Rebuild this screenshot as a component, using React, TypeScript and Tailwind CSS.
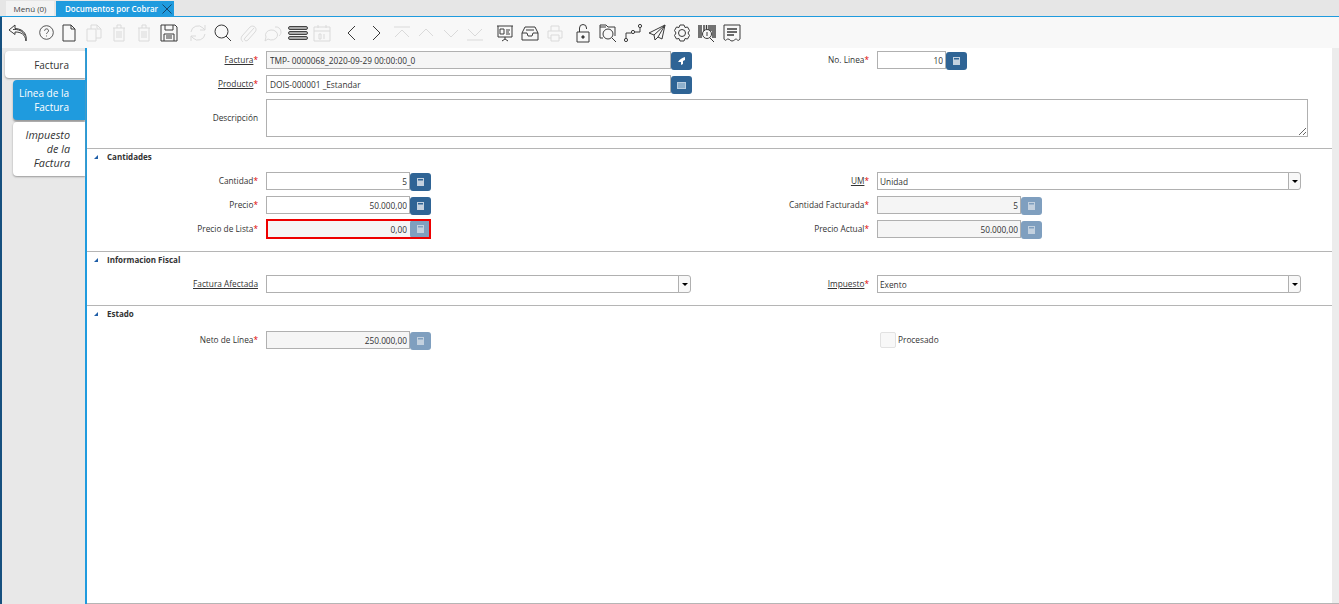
import type { ReactNode } from "react";

// toolbar icons, drawn on a 20x20 box
const icons: Record<string, ReactNode> = {
  back: <path d="M7 2 1 7l6 4.500V9c6 0 10 2 11 9 1-5-1-12-11-12.500zM5 6.500C10 6 15 8 16.500 12" />,
  help: (
    <>
      <circle cx="10" cy="10" r="8" />
      <path d="M7.800 8c0-3 4.600-3 4.600 0 0 1.800-2.300 1.800-2.300 3.600M10 13.600v1" />
    </>
  ),
  doc: <path d="M4 2h8l4 4v12H4zM12 2v4h4" />,
  copy: <path d="M3 6h9v12H3zM7 6V2h6l4 4v9h-5M13 2v4h4" />,
  trash: <path d="M4 5h12M8 5V2h4v3M5 5v13h10V5M8 8v7M10 8v7M12 8v7" />,
  save: (
    <>
      <path d="M2 2h14l2 2v14H2zM6 2v5h8V2M5 18v-7h10v7" />
      <path d="M7 13h6M7 15h6" />
    </>
  ),
  refresh: <path d="M3 9a7 7 0 0 1 12-4l2 2M17 11a7 7 0 0 1-12 4l-2-2M17 2v5h-5M3 18v-5h5" />,
  search: <path d="M8.500 2a6.500 6.500 0 1 0 0 13 6.500 6.500 0 0 0 0-13zM13 13l5 5" />,
  clip: <path d="M16 5 7 15c-2 2 1 4 3 2l7-8c3-3-1-8-5-5l-8 9c-2 3 0 5 1 6" />,
  chat: <path d="M12 4a5 5 0 0 1 6 5c0 2-1 3-2 4M8 7a6 5 0 1 1-3 9l-3 2 1-4a6 5 0 0 1 5-7z" />,
  calendar: (
    <>
      <path d="M2 4h16v14H2zM2 8h16M6 2v3M14 2v3" />
      <path d="M7 11h2v5H7zM12 11v5" />
    </>
  ),
  prev: <path d="m13 3-7 7 7 7" />,
  next: <path d="m7 3 7 7-7 7" />,
  first: <path d="M2 4h16M3 14l7-7 7 7" />,
  up: <path d="m3 13 7-7 7 7" />,
  down: <path d="m3 7 7 7 7-7" />,
  last: <path d="M2 17h16M3 6l7 7 7-7" />,
  report: (
    <>
      <path d="M2 3h16M3 3v11h14V3M10 14v2M7 18l3-2 3 2" />
      <path d="M5 6h4v5H5zM11 7h4M11 9h3M11 11h4" />
    </>
  ),
  archive: <path d="M5 4h10l3 6v7H2v-7zM2 10h5l1 3h4l1-3h5M6 7h8" />,
  print: <path d="M6 8V3h8v5M3 8h14v7h-3M6 15H3V8M6 12h8v6H6z" />,
  lock: (
    <>
      <path d="M4 9h12v10H4zM6.500 9V5a3.500 3.500 0 0 1 7 0v1" />
      <circle cx="10" cy="14" r="1.200" fill="currentColor" />
    </>
  ),
  zoom: (
    <>
      <path d="M2 15V2h6l2 2h7v9M2 4h6" />
      <circle cx="10" cy="11" r="5" />
      <path d="m14 15 4 4M2 15h3" />
    </>
  ),
  flow: (
    <>
      <circle cx="3" cy="17" r="1.600" />
      <circle cx="10" cy="9" r="1.600" />
      <circle cx="17" cy="3" r="1.600" />
      <path d="M3 15v-5h5.500M11.500 9H17V5" />
    </>
  ),
  send: <path d="M18 2 2 10l5 2 1 5 3-3 4 2zM18 2 7 12M18 2l-7 12" />,
  gear: (
    <>
      <path d="m8 2 4 0 1 2.500 2.500-.5 2 3.500L16 10l1.500 2.500-2 3.500-2.500-.5L12 18H8l-1-2.500-2.500.5-2-3.500L4 10 2.500 7.500l2-3.500 2.500.5z" />
      <circle cx="10" cy="10" r="3.500" />
    </>
  ),
  barcode: (
    <>
      <path d="M2 2v13M4 2v13M7 2v6M9.500 2v4M12 2v5M14 2v6M16 2v13M18 2v13" strokeWidth="1.400" />
      <circle cx="10" cy="11" r="4.500" />
      <path d="m13 15 4 4M10 9v4" />
    </>
  ),
  receipt: (
    <>
      <path d="M2 2h16v14c-2 3-3 0-4 0s-2 2-4 2-2-2-4-2-2 3-4 0z" />
      <path d="M5 6h10M5 9h10M5 12h7" strokeWidth="1.500" />
    </>
  ),
};

// spacing is taken from the gaps between the groups in the toolbar
const tools = [
  { name: "back", cls: "ml-[6px]" },
  { name: "help", cls: "ml-[10px]", size: "h-[17px] w-[17px]" },
  { name: "doc", cls: "ml-[4px]" },
  { name: "copy", cls: "ml-[5px]", off: true },
  { name: "trash", cls: "ml-[5px]", off: true },
  { name: "trash", cls: "ml-[5px]", off: true },
  { name: "save", cls: "ml-[5px]" },
  { name: "refresh", cls: "ml-[9px]", off: true },
  { name: "search", cls: "ml-[5px]" },
  { name: "clip", cls: "ml-[5px]", off: true },
  { name: "chat", cls: "ml-[5px]", off: true },
  { name: "list", cls: "ml-[5px]" },
  { name: "calendar", cls: "ml-[4px]", off: true },
  { name: "prev", cls: "ml-[10px]" },
  { name: "next", cls: "ml-[4px]" },
  { name: "first", cls: "ml-[6px]", off: true },
  { name: "up", cls: "ml-[4px]", off: true },
  { name: "down", cls: "ml-[5px]", off: true },
  { name: "last", cls: "ml-[4px]", off: true },
  { name: "report", cls: "ml-[10px]" },
  { name: "archive", cls: "ml-[5px]" },
  { name: "print", cls: "ml-[5px]", off: true },
  { name: "lock", cls: "ml-[8px]" },
  { name: "zoom", cls: "ml-[5px]" },
  { name: "flow", cls: "ml-[5px]" },
  { name: "send", cls: "ml-[4px]" },
  { name: "gear", cls: "ml-[5px]" },
  { name: "barcode", cls: "ml-[5px]" },
  { name: "receipt", cls: "ml-[5px]" },
];

function ToolIcon({ name, off, size }: { name: string; off?: boolean; size?: string }) {
  if (name === "list") {
    return (
      <div className="flex h-[20px] w-[20px] flex-col justify-center gap-[1px]">
        <div className="h-[4px] rounded-[2px] border border-[#444] bg-[#aaa]" />
        <div className="h-[4px] rounded-[2px] border border-[#444] bg-[#aaa]" />
        <div className="h-[4px] rounded-[2px] border border-[#444] bg-[#aaa]" />
      </div>
    );
  }
  return (
    <svg
      viewBox="0 0 20 20"
      fill="none"
      stroke="currentColor"
      strokeWidth="1"
      className={`${size ?? "h-[20px] w-[20px]"} ${off ? "text-[#dadada]" : "text-[#3a3a3a]"}`}
    >
      {icons[name]}
    </svg>
  );
}

function CalcButton({ off }: { off?: boolean }) {
  return (
    <div
      className={`flex h-[18px] w-[21px] shrink-0 items-center justify-center rounded-[3px] ${off ? "bg-[#7f9fbf]" : "bg-[#2f6495]"}`}
    >
      <svg viewBox="0 0 7 8" className="h-[8px] w-[7px]">
        <path fill="#c3d1df" d="M0 0h7v8H0z" />
        <path fill={off ? "#7f9fbf" : "#2f6495"} d="M1 1h5v1.500H1z" />
      </svg>
    </div>
  );
}

function Label({ text, link, req = true }: { text: string; link?: boolean; req?: boolean }) {
  return (
    <div className="pr-[8px] text-right text-[8.300px] text-[#333]">
      <span className={link ? "underline" : ""}>{text}</span>
      {req && <span className="text-[#e00000]">*</span>}
    </div>
  );
}

function TextField({
  value,
  right,
  off,
  boxed,
  button,
  width = "w-[144px]",
}: {
  value: string;
  right?: boolean;
  off?: boolean;
  boxed?: boolean;
  button?: ReactNode;
  width?: string;
}) {
  return (
    <div
      className={`flex items-center ${boxed ? "h-[20px] w-fit outline-2 -outline-offset-2 outline-[#ee0000]" : "[&>div]:mt-px [&>div]:-mb-px"}`}
    >
      <input
        readOnly
        value={value}
        className={`h-[18px] ${width} border ${boxed ? "border-transparent" : "border-[#b0b0b0]"} text-[8.300px] text-[#333] outline-none ${right ? "px-[2px] text-right" : "pl-[3px]"} ${off ? "bg-[#f5f5f5]" : "bg-white"}`}
      />
      {button}
    </div>
  );
}

function SelectField({ value, width }: { value: string; width: string }) {
  return (
    <div className="flex items-center">
      <input
        readOnly
        value={value}
        className={`h-[18px] ${width} border border-[#b0b0b0] bg-white px-[2px] text-[8.300px] text-[#333] outline-none`}
      />
      <div className="-ml-px flex h-[18px] w-[13px] items-center justify-center rounded-r-[3px] border border-[#b0b0b0] bg-[#f8f8f8]">
        <div className="h-0 w-0 border-x-[3px] border-t-[3px] border-x-transparent border-t-black" />
      </div>
    </div>
  );
}

function Section({ title, cls, children }: { title: string; cls: string; children: ReactNode }) {
  return (
    <section className={`border-t border-[#b5b5b5] ${cls}`}>
      <div className="flex h-[15px] items-center pl-[7px] text-[8px] font-bold text-[#333]">
        <div className="mr-[9px] h-0 w-0 border-b-[4px] border-l-[4px] border-b-[#1f5fa8] border-l-transparent" />
        {title}
      </div>
      {children}
    </section>
  );
}

const row = "grid grid-cols-[179px_426px_185px_431px] items-center";

export default function App() {
  return (
    <div className="flex h-[604px] w-[1339px] flex-col overflow-hidden bg-white font-['Open_Sans',sans-serif]">
      {/* tabs */}
      <div className="flex h-[17px] shrink-0 items-end border-b border-[#1f9bde] bg-[#e6e6e6] pl-[6px]">
        <div className="flex h-[15px] w-[48px] items-center justify-center bg-[#f3f3f3] text-[8px] text-[#444]">
          Menú (0)
        </div>
        <div className="ml-[2px] flex h-[15px] w-[118px] items-center whitespace-nowrap bg-[#1f9bde] pl-[9px] text-[8px] font-semibold text-white">
          Documentos por Cobrar
          <svg viewBox="0 0 10 10" className="ml-[4px] h-[10px] w-[10px]" stroke="#16456b" strokeWidth="1">
            <path d="m0.500 0.500 9 9M9.500 0.500l-9 9" />
          </svg>
        </div>
      </div>

      {/* toolbar */}
      <div className="flex h-[31px] shrink-0 items-center border-l-2 border-[#16507f] bg-[#f8f8f8]">
        {tools.map((t, i) => (
          <div key={i} className={t.cls}>
            <ToolIcon name={t.name} off={t.off} size={t.size} />
          </div>
        ))}
      </div>

      <div className="flex min-h-0 flex-1">
        {/* side tabs */}
        <aside className="flex w-[87px] shrink-0 flex-col items-end border-l-2 border-r-2 border-l-[#16507f] border-r-[#1f9bde] bg-[#e8e8e8] pt-[3px] text-right text-[10px] leading-[14px] text-[#333]">
          <div className="flex h-[27px] w-[80px] items-center justify-end rounded-l-[4px] bg-white pr-[16px] shadow-[0_1px_2px_#999]">
            Factura
          </div>
          <div className="mt-[2px] h-[40px] w-[72px] rounded-l-[4px] bg-[#1f9bde] pr-[16px] pt-[6px] text-white shadow-[0_2px_2px_#999]">
            Línea de la Factura
          </div>
          <div className="mt-[2px] h-[54px] w-[72px] rounded-l-[4px] bg-white pr-[15px] pl-[8px] pt-[6px] text-[10.800px] italic shadow-[0_1px_2px_#999]">
            Impuesto de la Factura
          </div>
        </aside>

        {/* form */}
        <main className="flex min-w-0 flex-1 flex-col border-b border-[#b5b5b5] pr-[7px]">
          <div className="h-full border-r-[7px] border-[#ececec] [margin-right:-7px]">
            <div className="h-[100px] pt-[3px]">
              <div className={row}>
                <Label text="Factura" link />
                <TextField
                  value="TMP- 0000068_2020-09-29 00:00:00_0"
                  off
                  width="w-[405px]"
                  button={
                    <div className="flex h-[18px] w-[21px] items-center justify-center rounded-[3px] bg-[#2f6495]">
                      <svg viewBox="0 0 8 8" className="h-[8px] w-[8px]">
                        <path fill="#fff" d="M7 0C4 1 2 2 0 5h3v3l2-1V4l2-1z" />
                      </svg>
                    </div>
                  }
                />
                <Label text="No. Linea" />
                <TextField value="10" right width="w-[69px]" button={<CalcButton />} />
              </div>
              <div className={`${row} mt-[6px]`}>
                <Label text="Producto" link />
                <TextField
                  value="DOIS-000001 _Estandar"
                  width="w-[405px]"
                  button={
                    <div className="flex h-[18px] w-[21px] items-center justify-center rounded-[3px] bg-[#2f6495]">
                      <div className="h-[7px] w-[9px] border border-[#b9cddf] bg-[#8fb0cc]" />
                    </div>
                  }
                />
              </div>
              <div className="mt-[6px] grid grid-cols-[179px_1042px] items-center">
                <Label text="Descripción" req={false} />
                <textarea
                  readOnly
                  className="block h-[38px] w-[1042px] border border-[#b0b0b0] bg-white outline-none"
                />
              </div>
            </div>

            <Section title="Cantidades" cls="h-[103px]">
              <div className={`${row} mt-[8px]`}>
                <Label text="Cantidad" />
                <TextField value="5" right button={<CalcButton />} />
                <Label text="UM" link />
                <SelectField value="Unidad" width="w-[412px]" />
              </div>
              <div className={`${row} mt-[6px]`}>
                <Label text="Precio" />
                <TextField value="50.000,00" right button={<CalcButton />} />
                <Label text="Cantidad Facturada" />
                <TextField value="5" right off button={<CalcButton off />} />
              </div>
              <div className={`${row} mt-[5px]`}>
                <Label text="Precio de Lista" />
                <TextField value="0,00" right off boxed button={<CalcButton off />} />
                <Label text="Precio Actual" />
                <TextField value="50.000,00" right off button={<CalcButton off />} />
              </div>
            </Section>

            <Section title="Informacion Fiscal" cls="h-[54px]">
              <div className={`${row} mt-[8px]`}>
                <Label text="Factura Afectada" link req={false} />
                <SelectField value="" width="w-[413px]" />
                <Label text="Impuesto" link />
                <SelectField value="Exento" width="w-[412px]" />
              </div>
            </Section>

            <Section title="Estado" cls="">
              <div className={`${row} mt-[10px]`}>
                <Label text="Neto de Línea" />
                <TextField value="250.000,00" right off button={<CalcButton off />} />
                <div />
                <div className="flex items-center pl-[3px] text-[8.300px] text-[#333]">
                  <div className="mr-[2px] h-[16px] w-[16px] rounded-[2px] border border-[#e2e2e2] bg-[#f8f8f8]" />
                  Procesado
                </div>
              </div>
            </Section>
          </div>
        </main>
      </div>
    </div>
  );
}
